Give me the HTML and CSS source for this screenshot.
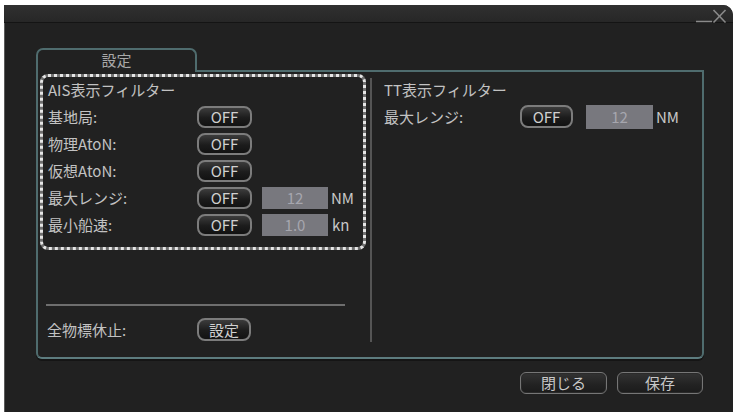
FILE: index.html
```html
<!DOCTYPE html>
<html lang="ja">
<head>
<meta charset="utf-8">
<title>設定</title>
<link rel="stylesheet" href="styles.css">
</head>
<body>
<div class="window">
  <div class="titlebar">
    <svg class="winctl" width="32" height="19" viewBox="0 0 32 19">
      <line x1="1" y1="16.5" x2="17" y2="16.5" stroke="#8a8a8a" stroke-width="1.5"/>
      <line x1="18.5" y1="5" x2="30.5" y2="17.5" stroke="#8a8a8a" stroke-width="1.6"/>
      <line x1="30.5" y1="5" x2="18.5" y2="17.5" stroke="#8a8a8a" stroke-width="1.6"/>
    </svg>
  </div>
  <div class="content">
    <div class="tab">設定</div>
    <div class="panel">
      <div class="col-left">
        <div class="dashed">
          <div class="heading">AIS表示フィルター</div>
          <div class="row">
            <span class="label">基地局:</span>
            <span class="btn">OFF</span>
          </div>
          <div class="row">
            <span class="label">物理AtoN:</span>
            <span class="btn">OFF</span>
          </div>
          <div class="row">
            <span class="label">仮想AtoN:</span>
            <span class="btn">OFF</span>
          </div>
          <div class="row">
            <span class="label">最大レンジ:</span>
            <span class="btn">OFF</span>
            <span class="field">12</span>
            <span class="unit">NM</span>
          </div>
          <div class="row">
            <span class="label">最小船速:</span>
            <span class="btn">OFF</span>
            <span class="field">1.0</span>
            <span class="unit unit-kn">kn</span>
          </div>
        </div>
        <div class="hline"></div>
        <div class="row row-stop">
          <span class="label label-stop">全物標休止:</span>
          <span class="btn btn-set">設定</span>
        </div>
      </div>
      <div class="divider"></div>
      <div class="col-right">
        <div class="heading">TT表示フィルター</div>
        <div class="row">
          <span class="label label-right">最大レンジ:</span>
          <span class="btn btn-right">OFF</span>
          <span class="field field-right">12</span>
          <span class="unit">NM</span>
        </div>
      </div>
    </div>
    <div class="actions">
      <span class="abtn abtn-close">閉じる</span>
      <span class="abtn abtn-save">保存</span>
    </div>
  </div>
</div>
</body>
</html>
```
FILE: styles.css
```css
html, body {
  margin: 0;
  padding: 0;
  background: #ffffff;
}
body {
  font-family: "Noto Sans CJK JP", "Noto Sans", sans-serif;
  font-size: 15px;
  color: #c2c2c2;
}
.window {
  margin: 5px 0 0 4px;
  width: 729px;
  height: 407px;
  background: #212121;
  border-top-right-radius: 10px;
  box-shadow: inset 1px 0 0 #5a5a5a;
  overflow: hidden;
}
.titlebar {
  height: 17px;
  background: linear-gradient(#303030, #272727);
  border-bottom: 1px solid #141414;
  display: flex;
  justify-content: flex-end;
  padding-right: 6px;
}
.winctl {
  display: block;
  overflow: visible;
}
.content {
  padding: 25px 0 0 32px;
}
.tab {
  position: relative;
  z-index: 1;
  width: 157px;
  height: 22px;
  margin-bottom: -2px;
  border: 2px solid #4f6c6e;
  border-bottom: 0;
  border-radius: 7px 7px 0 0;
  background: #212121;
  text-align: center;
  line-height: 20px;
  color: #a8a8a8;
}
.panel {
  width: 664px;
  height: 285px;
  border: 2px solid #4f6c6e;
  border-bottom-color: #5d7c7f;
  border-radius: 0 0 6px 6px;
  box-shadow: 0 2px 0 #151515;
  padding: 2px 0 0 2px;
  box-sizing: content-box;
  display: grid;
  grid-template-columns: 330px 2px 1fr;
  align-items: start;
}
.panel { width: 662px; height: 283px; }
.col-left {
  display: flex;
  flex-direction: column;
}
.dashed {
  width: 320px;
  height: 170px;
  border: 3px dotted #e6e6e6;
  border-radius: 8px;
  background: linear-gradient(#212121, #212121) padding-box, #707070 border-box;
  padding-left: 5px;
  box-sizing: content-box;
  width: 315px;
}
.heading {
  height: 26px;
  line-height: 26px;
  white-space: nowrap;
}
.row {
  height: 27px;
  display: flex;
  align-items: center;
  white-space: nowrap;
}
.label {
  width: 149px;
  flex: none;
}
.btn {
  flex: none;
  width: 51px;
  height: 18px;
  border: 2px solid #7c7c7c;
  border-radius: 8px;
  background: linear-gradient(#3c3c3c, #1c1c1c 55%, #121212);
  color: #d0d0d0;
  text-align: center;
  line-height: 18px;
  font-size: 15px;
}
.field {
  flex: none;
  width: 66px;
  height: 22px;
  margin-left: 10px;
  background: #78787e;
  color: #a6a6ae;
  text-align: center;
  line-height: 22px;
}
.unit {
  margin-left: 3px;
  color: #c8c8c8;
}
.unit-kn {
  margin-left: 4px;
}
.hline {
  margin: 54px 0 0 6px;
  width: 299px;
  height: 2px;
  background: #6e6e6e;
}
.row-stop {
  margin-top: 12px;
  height: 23px;
}
.label-stop {
  padding-left: 7px;
  width: 150px;
}
.btn-set {
  width: 50px;
  height: 19px;
  line-height: 19px;
}
.divider {
  margin-top: 4px;
  height: 264px;
  background: #555555;
}
.col-right {
  padding: 3px 0 0 12px;
}
.label-right {
  width: 136px;
}
.btn-right {
  width: 49px;
  height: 19px;
  line-height: 19px;
}
.field-right {
  margin-left: 13px;
  width: 67px;
  height: 24px;
  line-height: 24px;
}
.actions {
  width: 667px;
  margin-top: 13px;
  display: flex;
  justify-content: flex-end;
  gap: 10px;
}
.abtn {
  height: 20px;
  border: 1px solid #767676;
  border-radius: 6px;
  background: linear-gradient(#333333, #222222 60%, #1b1b1b);
  color: #c8c8c8;
  text-align: center;
  line-height: 20px;
  box-shadow: inset 0 0 0 1px #2a2a2a;
}
.abtn-close {
  width: 85px;
}
.abtn-save {
  width: 84px;
}
```
